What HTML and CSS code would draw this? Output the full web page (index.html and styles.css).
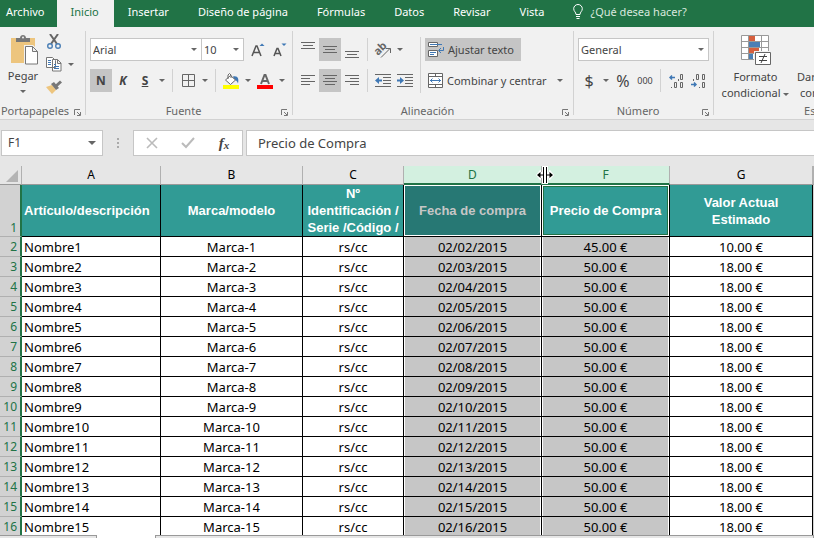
FILE: index.html
```html
<!DOCTYPE html>
<html lang="es">
<head>
<meta charset="utf-8">
<meta name="viewport" content="width=device-width, initial-scale=1">
<title>Inventario</title>
<link rel="stylesheet" href="styles.css">
</head>
<body>
<svg class="defs" aria-hidden="true">
  <symbol id="launch" viewBox="0 0 7 7"><path d="M.5 6V.5H6M3 3l3 3M6.500 3v3.500H3" fill="none" stroke="#777"/></symbol>
</svg>
<nav class="tabs">
  <a class="tab file" href="#">Archivo</a>
  <a class="tab active" href="#">Inicio</a>
  <a class="tab" href="#">Insertar</a>
  <a class="tab" href="#">Diseño de página</a>
  <a class="tab" href="#">Fórmulas</a>
  <a class="tab" href="#">Datos</a>
  <a class="tab" href="#">Revisar</a>
  <a class="tab" href="#">Vista</a>
  <a class="tab tell" href="#"><svg width="10" height="15" viewBox="0 0 10 15" fill="none" stroke="#fff"><path d="M3 10.500C3 8 .7 7.500.7 4.700a4.300 4.200 0 0 1 8.600 0C9.300 7.500 7 8 7 10.500zM3 12.500h4M3.500 14.500h3"/></svg>¿Qué desea hacer?</a>
</nav>

<main class="ribbon">
  <section class="group clipboard">
    <div class="body">
      <button class="paste"><svg width="28" height="30" viewBox="0 0 28 30"><path d="M0 3h24v25H0z" fill="#edc57e"/><path d="M5 7V3h4c0-4 6-4 6 0h4v4z" fill="#777"/><circle cx="12" cy="2.500" r="1" fill="#f1f1f1"/><path d="M13 10h9l6 6v14H13z" fill="#f1f1f1"/><path d="M14.500 11.500h7l5 5v12.500h-12zM21.500 11.500v5h5" fill="#fff" stroke="#777"/></svg><span>Pegar</span><i class="caret"></i></button>
      <div class="clip">
        <button aria-label="Cortar"><svg width="16" height="15" viewBox="0 0 16 15" fill="none"><path d="M4 0l7 10M12 0L5 10" stroke="#666" stroke-width="2"/><circle cx="4" cy="12" r="2.300" stroke="#4b7fb5" stroke-width="1.400"/><circle cx="12" cy="12" r="2.300" stroke="#4b7fb5" stroke-width="1.400"/></svg></button>
        <button class="copy" aria-label="Copiar"><svg width="16" height="15" viewBox="0 0 16 15" stroke="#777" fill="#fff"><path d="M.5.5h6l3 3v7h-9zM6.500 2.500h5l3.500 3.500v8H6.500zM11.500 2.500v4H15"/><path d="M2 3.500h3M2 5.500h3M2 7.500h3M8 7.500h2M8 9.500h5M8 11.500h5" stroke="#3f78b5"/></svg><i class="caret"></i></button>
        <button aria-label="Copiar formato"><svg width="16" height="14" viewBox="0 0 16 14"><path d="M0 7l6-2 4 5-4 4z" fill="#edc57e"/><path d="M5 4l3-2 5 6-3 2z" fill="#777"/><path d="M9 5l5-4.500 2 2-5 4.500z" fill="#777"/></svg></button>
      </div>
    </div>
    <footer><span>Portapapeles</span><svg class="launch"><use href="#launch"/></svg></footer>
  </section>

  <section class="group font">
    <div class="rows">
      <div class="row">
        <label class="pick face"><select aria-label="Fuente"><option>Arial</option></select></label>
        <label class="pick size"><select aria-label="Tamaño"><option>10</option></select></label>
        <button class="tool grow" aria-label="Aumentar tamaño"><svg width="14" height="14" viewBox="0 0 14 14"><path d="M1 13l4-10h1l4 10M2.500 9.500h6" fill="none" stroke="#555" stroke-width="1.500"/><path d="M8.500 3L11 .5 13.500 3z" fill="#3f78b5"/></svg></button>
        <button class="tool" aria-label="Disminuir tamaño"><svg width="14" height="14" viewBox="0 0 14 14"><path d="M1 13l3-7.500h1l3 7.500M2 10.500h5" fill="none" stroke="#555" stroke-width="1.500"/><path d="M8.500.5h5L11 3z" fill="#3f78b5"/></svg></button>
      </div>
      <div class="row">
        <button class="tool on"><b>N</b></button>
        <button class="tool"><b><em>K</em></b></button>
        <button class="tool"><b><u>S</u></b></button><button class="drop" aria-label="Subrayado"><i class="caret"></i></button>
        <i class="sep"></i>
        <button class="tool" aria-label="Bordes"><svg width="13" height="13" viewBox="0 0 13 13" fill="none" stroke="#666"><path d="M.5.5h12v12H.5zM6.500 0v13M0 6.500h13"/></svg></button><button class="drop" aria-label="Más bordes"><i class="caret"></i></button>
        <i class="sep"></i>
        <button class="tool" aria-label="Color de relleno"><svg width="16" height="16" viewBox="0 0 16 16"><path d="M10 3.500c5-1 6 2 5 7-1-3-2-3-4-4z" fill="#3f78b5"/><path d="M2.500 7L7.500 2.500l5 4.500-5 4.500zM5 6V2q1.500-3 3 0v3" fill="#fff" stroke="#666"/><path d="M0 12h16v4H0z" fill="#ff0"/></svg></button><button class="drop" aria-label="Más rellenos"><i class="caret"></i></button>
        <button class="tool" aria-label="Color de fuente"><svg width="16" height="16" viewBox="0 0 16 16"><path d="M4 11L7.500 2h1L12 11M5 8h6" fill="none" stroke="#666" stroke-width="2"/><path d="M0 12h16v4H0z" fill="red"/></svg></button><button class="drop" aria-label="Más colores"><i class="caret"></i></button>
      </div>
    </div>
    <footer><span>Fuente</span><svg class="launch"><use href="#launch"/></svg></footer>
  </section>

  <section class="group align">
    <div class="rows">
      <div class="row">
        <button class="tool" aria-label="Alinear arriba"><svg width="14" height="16" viewBox="0 0 14 16" stroke="#666"><path d="M0 .5h14M2 3.500h10M0 6.500h14"/></svg></button>
        <button class="tool on" aria-label="Alinear en el medio"><svg width="14" height="16" viewBox="0 0 14 16" stroke="#666"><path d="M0 4.500h14M2 7.500h10M0 10.500h14"/></svg></button>
        <button class="tool" aria-label="Alinear abajo"><svg width="14" height="16" viewBox="0 0 14 16" stroke="#666"><path d="M0 9.500h14M2 12.500h10M0 15.500h14"/></svg></button>
        <i class="sep"></i>
        <button class="tool" aria-label="Orientación"><svg class="turned" width="17" height="16" viewBox="0 0 17 16"><text x="0" y="11" transform="rotate(-45 5 9)">ab</text><path d="M6 15.500l9-9M11 6.500h4.500V11" fill="none" stroke="#666"/></svg></button><button class="drop" aria-label="Más orientaciones"><i class="caret"></i></button>
      </div>
      <div class="row">
        <button class="tool" aria-label="Izquierda"><svg width="14" height="11" viewBox="0 0 14 11" stroke="#666"><path d="M0 .5h14M0 3.500h9M0 6.500h14M0 9.500h9"/></svg></button>
        <button class="tool on" aria-label="Centrar"><svg width="14" height="11" viewBox="0 0 14 11" stroke="#666"><path d="M0 .5h14M2 3.500h10M0 6.500h14M2 9.500h10"/></svg></button>
        <button class="tool" aria-label="Derecha"><svg width="14" height="11" viewBox="0 0 14 11" stroke="#666"><path d="M0 .5h14M5 3.500h9M0 6.500h14M5 9.500h9"/></svg></button>
        <i class="sep"></i>
        <button class="tool" aria-label="Disminuir sangría"><svg width="16" height="13" viewBox="0 0 16 13"><path d="M0 .5h16M8 3.500h8M8 6.500h8M8 9.500h8M0 12.500h16" stroke="#666"/><path d="M0 6.500L4 3v2.500h3v2H4V10z" fill="#3f78b5"/></svg></button>
        <button class="tool" aria-label="Aumentar sangría"><svg width="16" height="13" viewBox="0 0 16 13"><path d="M0 .5h16M8 3.500h8M8 6.500h8M8 9.500h8M0 12.500h16" stroke="#666"/><path d="M7 6.500L3 3v2.500H0v2h3V10z" fill="#3f78b5"/></svg></button>
      </div>
    </div>
    <i class="rule"></i>
    <div class="rows wide">
      <button class="text on"><svg width="16" height="15" viewBox="0 0 16 15" fill="none" stroke="#666"><path d="M.5.5h9v4h-9zM.5 8.500h9v6h-9z" fill="#fff"/><path d="M2 2.500h12M2 10.500h6M2 12.500h4M15.500 5v3.500H11M13 6l-2.500 2.500L13 11" stroke="#3f78b5"/></svg>Ajustar texto</button>
      <div class="row"><button class="text"><svg width="15" height="15" viewBox="0 0 15 15" fill="#fff" stroke="#666"><path d="M.5.500h14v14H.5zM0 3.500h15M0 11.500h15M7.500 0v3M7.500 12v3"/><path d="M2 7.500h11M4.500 5.500l-2 2 2 2M10.500 5.500l2 2-2 2" fill="none" stroke="#3f78b5"/></svg>Combinar y centrar</button><button class="drop" aria-label="Más opciones"><i class="caret"></i></button></div>
    </div>
    <footer><span>Alineación</span><svg class="launch"><use href="#launch"/></svg></footer>
  </section>

  <section class="group number">
    <div class="rows">
      <label class="pick"><select aria-label="Formato de número"><option>General</option></select></label>
      <div class="row">
        <button class="tool money">$</button><button class="drop" aria-label="Monedas"><i class="caret"></i></button>
        <button class="tool pct">%</button>
        <button class="tool mil">000</button>
        <i class="sep"></i>
        <button class="tool" aria-label="Aumentar decimales"><svg width="15" height="14" viewBox="0 0 15 14" fill="none" stroke="#666"><path d="M11.500.5h2v5h-2zM9.500 5v2M5.500 8.500h2v5h-2zM11.500 8.500h2v5h-2zM2.500 13v1"/><path d="M6 3.500H1M3 1.500l-2 2 2 2" stroke="#3f78b5" stroke-width="1.500"/></svg></button>
        <button class="tool" aria-label="Disminuir decimales"><svg width="15" height="14" viewBox="0 0 15 14" fill="none" stroke="#666"><path d="M5.500.5h2v5h-2zM11.500.5h2v5h-2zM2.500 5v2M11.500 8.500h2v5h-2zM8.500 13v1"/><path d="M0 10.500h5M3 8.500l2 2-2 2" stroke="#3f78b5" stroke-width="1.500"/></svg></button>
      </div>
    </div>
    <footer><span>Número</span><svg class="launch"><use href="#launch"/></svg></footer>
  </section>

  <section class="group styles">
    <div class="body">
      <button class="big"><svg width="30" height="30" viewBox="0 0 30 30"><path d="M.5.500h27v24H.5z" fill="#fff"/><path d="M8 0h6v6H8zM8 13h10v5H8z" fill="#d65f3d"/><path d="M8 7h11v5H8zM8 19h4v6H8z" fill="#4b7fb5"/><path d="M.5.500h27v24H.5zM0 6.500h28M0 12.500h28M0 18.500h28M7.500 0v25M20.500 0v25" fill="none" stroke="#999"/><path d="M13 16h17v14H13z" fill="#f1f1f1"/><path d="M14.500 17.500h15v12h-15z" fill="#fff" stroke="#666"/><path d="M18 21.500h8M18 25.500h8M24 19l-4 9" stroke="#444" fill="none"/></svg><span>Formato<br>condicional <i class="caret"></i></span></button>
      <button class="big next"><span>Dar formato<br>como tabla</span></button>
    </div>
    <footer><span>Estilos</span></footer>
  </section>
</main>

<div class="formula">
  <div class="name"><input aria-label="Cuadro de nombres" value="F1"><button aria-label="Lista de nombres"><i class="caret big-caret"></i></button></div>
  <i class="dots"></i>
  <div class="actions">
    <button aria-label="Cancelar"><svg width="12" height="12" viewBox="0 0 12 12"><path d="M1 1l10 10M11 1L1 11" stroke="#bbb" stroke-width="1.600"/></svg></button>
    <button aria-label="Introducir"><svg width="14" height="12" viewBox="0 0 14 12"><path d="M1 6l4 4 8-9" fill="none" stroke="#bbb" stroke-width="2"/></svg></button>
    <button class="fx" aria-label="Insertar función">f<small>x</small></button>
  </div>
  <input class="entry" aria-label="Barra de fórmulas" value="Precio de Compra">
</div>

<div class="sheet">
<table>
<colgroup><col class="c-num"><col class="c-a"><col class="c-b"><col class="c-c"><col class="c-d"><col class="c-f"><col class="c-g"><col></colgroup>
<thead><tr><th class="corner"><svg width="12" height="12" viewBox="0 0 12 12"><path d="M12 0v12H0z" fill="#b4b4b4"/></svg></th><th>A</th><th>B</th><th>C</th><th class="picked">D</th><th class="picked last">F<svg class="cursor" width="18" height="18" viewBox="0 0 18 18"><path d="M6 0h6v6h1V4h1l4 5-4 5h-1v-2h-1v6H6v-6H5v2H4L0 9l4-5h1v2h1z" fill="#fff"/><path d="M7.500 1v16M10.500 1v16M2 9h5M11 9h5" stroke="#000"/><path d="M1 9l3.500-3v6zM17 9l-3.500-3v6z"/></svg></th><th>G</th><th></th></tr></thead>
<tbody>
<tr class="titles"><th>1</th><td>Artículo/descripción</td><td>Marca/modelo</td><td>Nº Identificación / Serie /Código /</td><td>Fecha de compra</td><td class="current">Precio de Compra</td><td>Valor Actual<br>Estimado</td><td></td></tr>
<tr><th>2</th><td>Nombre1</td><td>Marca-1</td><td>rs/cc</td><td>02/02/2015</td><td>45.00 €</td><td>10.00 €</td><td></td></tr>
<tr><th>3</th><td>Nombre2</td><td>Marca-2</td><td>rs/cc</td><td>02/03/2015</td><td>50.00 €</td><td>18.00 €</td><td></td></tr>
<tr><th>4</th><td>Nombre3</td><td>Marca-3</td><td>rs/cc</td><td>02/04/2015</td><td>50.00 €</td><td>18.00 €</td><td></td></tr>
<tr><th>5</th><td>Nombre4</td><td>Marca-4</td><td>rs/cc</td><td>02/05/2015</td><td>50.00 €</td><td>18.00 €</td><td></td></tr>
<tr><th>6</th><td>Nombre5</td><td>Marca-5</td><td>rs/cc</td><td>02/06/2015</td><td>50.00 €</td><td>18.00 €</td><td></td></tr>
<tr><th>7</th><td>Nombre6</td><td>Marca-6</td><td>rs/cc</td><td>02/07/2015</td><td>50.00 €</td><td>18.00 €</td><td></td></tr>
<tr><th>8</th><td>Nombre7</td><td>Marca-7</td><td>rs/cc</td><td>02/08/2015</td><td>50.00 €</td><td>18.00 €</td><td></td></tr>
<tr><th>9</th><td>Nombre8</td><td>Marca-8</td><td>rs/cc</td><td>02/09/2015</td><td>50.00 €</td><td>18.00 €</td><td></td></tr>
<tr><th>10</th><td>Nombre9</td><td>Marca-9</td><td>rs/cc</td><td>02/10/2015</td><td>50.00 €</td><td>18.00 €</td><td></td></tr>
<tr><th>11</th><td>Nombre10</td><td>Marca-10</td><td>rs/cc</td><td>02/11/2015</td><td>50.00 €</td><td>18.00 €</td><td></td></tr>
<tr><th>12</th><td>Nombre11</td><td>Marca-11</td><td>rs/cc</td><td>02/12/2015</td><td>50.00 €</td><td>18.00 €</td><td></td></tr>
<tr><th>13</th><td>Nombre12</td><td>Marca-12</td><td>rs/cc</td><td>02/13/2015</td><td>50.00 €</td><td>18.00 €</td><td></td></tr>
<tr><th>14</th><td>Nombre13</td><td>Marca-13</td><td>rs/cc</td><td>02/14/2015</td><td>50.00 €</td><td>18.00 €</td><td></td></tr>
<tr><th>15</th><td>Nombre14</td><td>Marca-14</td><td>rs/cc</td><td>02/15/2015</td><td>50.00 €</td><td>18.00 €</td><td></td></tr>
<tr><th>16</th><td>Nombre15</td><td>Marca-15</td><td>rs/cc</td><td>02/16/2015</td><td>50.00 €</td><td>18.00 €</td><td></td></tr>
</tbody>
</table>
</div>
<div class="sheetbar"><i></i><i></i></div>
</body>
</html>
```
FILE: styles.css
```css
* { box-sizing: border-box; }
body { margin: 0; height: 100vh; display: flex; flex-direction: column; overflow: hidden; background: #e6e6e6; color: #444; font: 11px/16px "Noto Sans", sans-serif; }
button, input, select { font: inherit; color: inherit; margin: 0; padding: 0; border: 0; background: none; border-radius: 0; }
svg { display: block; flex: none; }
.defs { position: absolute; width: 0; height: 0; }

.tabs { flex: none; display: flex; height: 27px; background: #217346; white-space: nowrap; overflow: hidden; }
.tab { padding: 4px 15px 0 14px; color: #fff; text-decoration: none; }
.file { padding: 4px 12px 0 6px; }
.active { background: #f1f1f1; color: #217346; }
.tell { display: flex; gap: 7px; color: #d9e8df; }

.ribbon { flex: none; display: flex; height: 93px; padding-top: 4px; background: #f1f1f1; border-bottom: 1px solid #d2d2d2; overflow: hidden; }
.group { flex: none; height: 84px; display: grid; grid-template-rows: 1fr 8px; border-right: 1px solid #d2d2d2; white-space: nowrap; }
.group footer { grid-column: 1 / -1; display: flex; align-items: center; color: #666; line-height: 8px; }
.group footer span { flex: 1; text-align: center; }
.launch { width: 7px; height: 7px; margin: 2px 4px 0; }
.clipboard { width: 86px; }
.font { width: 207px; padding-left: 4px; }
.align { width: 281px; padding-left: 4px; grid-template-columns: 123px 1px 1fr; }
.number { width: 140px; padding: 0 4px; }
.number .launch { margin-right: 0; }
.styles { width: 214px; }
.body { display: flex; align-items: flex-start; }
.rows { display: flex; flex-direction: column; gap: 8px; padding-top: 7px; }
.row { display: flex; height: 23px; }
.wide { padding-left: 4px; align-items: flex-start; }
.rule, .sep { width: 1px; background: #d2d2d2; }
.rule { margin: 6px 0 14px; }
.sep { margin: 0 4px; }
.tool { width: 22px; height: 23px; flex: none; display: flex; align-items: center; justify-content: center; }
.tool b { font-size: 12px; }
.grow { margin-left: 3px; }
.on { background: #c5c5c5; }
.drop { width: 12px; display: flex; align-items: center; justify-content: center; }
.caret { display: inline-block; border: 3px solid transparent; border-top-color: #666; border-bottom: 0; vertical-align: middle; }
.pick { position: relative; display: block; height: 23px; background: #fff; border: 1px solid #c6c6c6; }
.pick select { appearance: none; width: 100%; height: 21px; padding-left: 2px; }
.pick::after { content: ""; position: absolute; right: 4px; top: 9px; border: 3px solid transparent; border-top-color: #666; border-bottom: 0; pointer-events: none; }
.face { width: 112px; }
.size { width: 42px; border-left: 0; }
.text { height: 23px; display: flex; align-items: center; gap: 4px; padding: 0 7px 0 3px; }
.money, .pct { font-size: 16px; }
.mil { font-size: 9px; }
.turned { overflow: visible; }
.turned text { font-size: 11px; font-weight: 700; fill: #666; }

.paste { width: 46px; padding-top: 4px; display: flex; flex-direction: column; align-items: center; }
.paste svg { margin-left: 4px; }
.paste span { line-height: 22px; }
.paste .caret { margin-top: 3px; }
.clip { display: flex; flex-direction: column; gap: 8px; padding-top: 3px; }
.copy { display: flex; align-items: center; gap: 6px; }
.big { width: 83px; padding-top: 4px; display: flex; flex-direction: column; align-items: center; gap: 4px; }
.next { padding-top: 38px; align-items: flex-start; }

.formula { flex: none; display: flex; height: 46px; padding: 10px 0; font-size: 12px; }
.name { width: 102px; margin-left: 1px; height: 26px; display: flex; background: #fff; border: 1px solid #c6c6c6; }
.name input { flex: 1; min-width: 0; padding-left: 6px; }
.name button { width: 20px; }
.big-caret { width: 8px; border-width: 4px 4px 0; display: block; margin: auto; }
.dots { width: 2px; margin: 8px 14px; background: repeating-linear-gradient(#aaa 0 2px, transparent 2px 4px); }
.actions { width: 110px; height: 26px; display: flex; background: #fff; border: 1px solid #c6c6c6; }
.actions button { flex: 1; display: flex; align-items: center; justify-content: center; }
.actions .fx { font: italic bold 15px "Liberation Serif", serif; }
.fx small { font-size: 11px; padding-top: 4px; }
.entry { flex: 1; height: 26px; margin-left: 3px; padding-left: 11px; background: #fff; border: 1px solid #c6c6c6; border-right: 0; font-size: 13px; }

.sheet { flex: 1; min-height: 0; overflow: hidden; background: #fff; }
table { width: 100%; table-layout: fixed; border-collapse: separate; border-spacing: 0; color: #000; font-size: 13px; line-height: 16px; }
.c-num { width: 22px; } .c-a { width: 139px; } .c-b { width: 142px; } .c-c { width: 101px; }
.c-d { width: 138px; } .c-f { width: 128px; } .c-g { width: 143px; }
th { padding: 0; font-weight: 400; }
thead th { position: relative; height: 19px; background: #e6e6e6; border-right: 1px solid #b0b0b0; border-bottom: 1px solid #999; font-size: 12px; }
thead .picked { background: #d3f0e0; color: #217346; border-bottom: 2px solid #217346; }
.corner svg { margin: 2px 0 0 6px; }
.cursor { position: absolute; left: -6px; top: 0; }
tbody th { height: 20px; background: #d2d2d2; color: #217346; border-right: 2px solid #217346; border-bottom: 1px solid #b0b0b0; text-align: right; padding-right: 3px; font-size: 12px; }
td { height: 20px; padding: 0 2px; text-align: center; border-right: 1px solid #000; border-bottom: 1px solid #000; overflow: hidden; white-space: nowrap; }
td:nth-child(2) { text-align: left; }
td:nth-child(5), td:nth-child(6) { background: #c6c6c6; box-shadow: inset 1px 0 #fff, inset -1px 0 #fff; }
td:last-child { border-color: #d2d2d2; padding: 0; }
.titles th { vertical-align: bottom; }
.titles td { background: #319b95; color: #fff; font: bold 13px/17px "Liberation Sans", sans-serif; white-space: normal; }
.titles td:nth-child(5) { background: #277874; color: #c6c6c6; box-shadow: inset 0 0 0 1px #fff; }
.titles .current { background: #319b95; box-shadow: inset 0 0 0 1px #fff, inset 0 0 0 2px #217346; }
.titles td:last-child { background: #fff; }

.sheetbar { flex: none; height: 3px; display: flex; justify-content: space-between; background: #fff; }
.sheetbar i { background: #e6e6e6; border-top: 1px solid #999; border-right: 1px solid #999; width: 97px; }
.sheetbar i:last-child { flex: 1; margin-left: 58px; border-left: 1px solid #999; }
```
